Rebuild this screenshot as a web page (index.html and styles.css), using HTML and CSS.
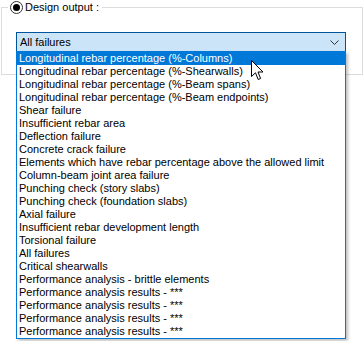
FILE: index.html
```html
<html>
  <head>
    <meta charset="utf-8">
    <title>Design output</title>
    <link rel="stylesheet" href="styles.css">
  </head>
  <body>

    <div class="group">
      <div class="legend"><span class="radio"></span>Design output :</div>
      <div class="combo">
        <span>All failures</span>
        <svg class="chev" width="9" height="5" viewBox="0 0 9 5"><path d="M0.5 0.5 L4.5 4.5 L8.5 0.5" fill="none" stroke="#333" stroke-width="1"/></svg>
      </div>
    </div>

    <!-- open list of the combo -->
    <ul class="dropdown">
      <li class="sel">Longitudinal rebar percentage (%-Columns)</li>
      <li>Longitudinal rebar percentage (%-Shearwalls)</li>
      <li>Longitudinal rebar percentage (%-Beam spans)</li>
      <li>Longitudinal rebar percentage (%-Beam endpoints)</li>
      <li>Shear failure</li>
      <li>Insufficient rebar area</li>
      <li>Deflection failure</li>
      <li>Concrete crack failure</li>
      <li>Elements which have rebar percentage above the allowed limit</li>
      <li>Column-beam joint area failure</li>
      <li>Punching check (story slabs)</li>
      <li>Punching check (foundation slabs)</li>
      <li>Axial failure</li>
      <li>Insufficient rebar development length</li>
      <li>Torsional failure</li>
      <li>All failures</li>
      <li>Critical shearwalls</li>
      <li>Performance analysis - brittle elements</li>
      <li>Performance analysis results - ***</li>
      <li>Performance analysis results - ***</li>
      <li>Performance analysis results - ***</li>
      <li>Performance analysis results - ***</li>
    </ul>

    <svg class="cursor" width="13" height="21" viewBox="0 0 13 21">
      <path d="M0.5 0.5 L0.5 16.5 L4.5 12.8 L7.2 19.5 L9.6 18.5 L7 12 L12 12 Z" fill="#fff" stroke="#000" stroke-width="1" stroke-linejoin="miter"/>
    </svg>

  </body>
</html>
```

FILE: styles.css
```css
body {
  margin: 0;
  background: #fff;
  font-family: "Liberation Sans", Arial, sans-serif;
  font-size: 11px;
  color: #000;
  overflow: hidden;
}

.group {
  position: relative;
  box-sizing: border-box;
  margin: 7px 0 0 1px;
  width: 362px;
  height: 68px;
  border: 1px solid #dcdcdc;
  padding: 24px 0 0 14px;
}

.legend {
  position: absolute;
  left: 6px;
  top: -8px;
  background: #fff;
  padding: 0 3px 0 2px;
  display: flex;
  align-items: center;
  height: 15px;
  line-height: 15px;
}

.radio {
  box-sizing: border-box;
  width: 13px;
  height: 13px;
  border: 1px solid #333;
  border-radius: 50%;
  margin-right: 2px;
  display: flex;
  align-items: center;
  justify-content: center;
}

.radio::after {
  content: "";
  width: 7px;
  height: 7px;
  border-radius: 50%;
  background: #000;
}

.combo {
  box-sizing: border-box;
  width: 330px;
  height: 20px;
  border: 1px solid #005499;
  background: #cce4f7;
  display: flex;
  align-items: center;
  justify-content: space-between;
  padding: 0 6px 0 3px;
}

.dropdown {
  position: absolute;
  left: 16px;
  top: 51px;
  box-sizing: border-box;
  width: 330px;
  margin: 0;
  padding: 0;
  list-style: none;
  background: #fff;
  border: 1px solid #0078d7;
  box-shadow: 2px 2px 3px rgba(0, 0, 0, 0.25);
}

.dropdown li {
  height: 13px;
  line-height: 13px;
  padding-left: 2px;
  white-space: nowrap;
}

.dropdown .sel {
  background: #0078d7;
  color: #fff;
}

.cursor {
  position: absolute;
  left: 251px;
  top: 60px;
}
```
